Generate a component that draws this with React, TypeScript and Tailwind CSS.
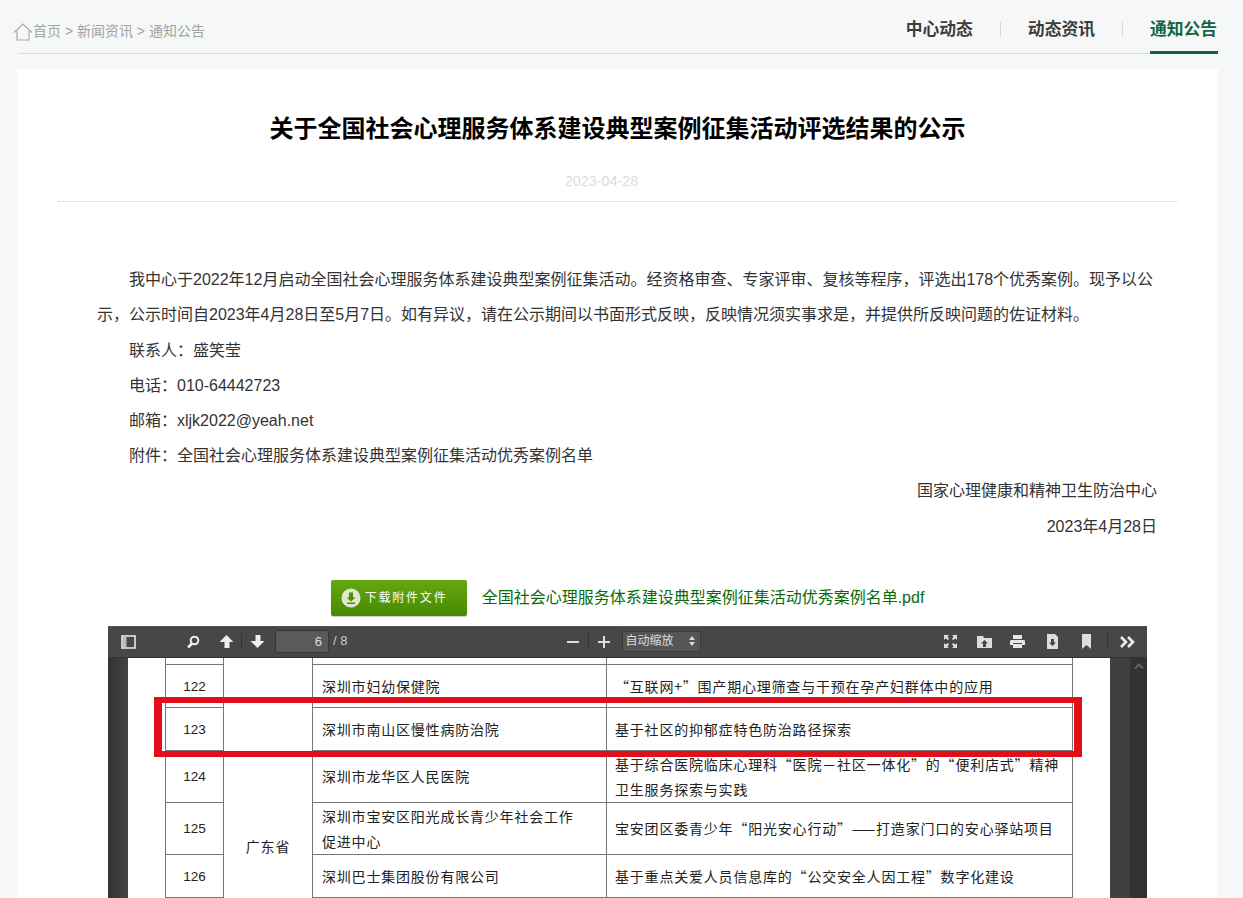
import React from "react";

const rows = [
  { h: "h-[7px]", n: "", org: "", title: "" },
  { h: "h-[43px]", n: "122", org: "深圳市妇幼保健院", title: "“互联网+”围产期心理筛查与干预在孕产妇群体中的应用" },
  { h: "h-[43px]", n: "123", org: "深圳市南山区慢性病防治院", title: "基于社区的抑郁症特色防治路径探索" },
  { h: "h-[52px]", n: "124", org: "深圳市龙华区人民医院", title: "基于综合医院临床心理科“医院－社区一体化”的“便利店式”精神卫生服务探索与实践" },
  { h: "h-[52px]", n: "125", org: "深圳市宝安区阳光成长青少年社会工作促进中心", title: "宝安团区委青少年“阳光安心行动”——打造家门口的安心驿站项目" },
  { h: "h-[43px]", n: "126", org: "深圳巴士集团股份有限公司", title: "基于重点关爱人员信息库的“公交安全人因工程”数字化建设" },
];

function Tool({ children, className = "" }: { children: React.ReactNode; className?: string }) {
  return <span className={`flex items-center justify-center mt-[1px] text-[#e6e6e6] ${className}`}>{children}</span>;
}

function Toolbar() {
  return (
    <div className="h-[32px] shrink-0 bg-[#474747] border-b border-[#333] flex items-center text-[#d9d9d9] text-[13px] relative shadow-[inset_0_1px_0_#555]">
      <Tool className="w-[16px] ml-[12px]">
        <svg width="15" height="14" viewBox="0 0 15 14"><rect x="1" y="1" width="13" height="12" fill="none" stroke="#e6e6e6" strokeWidth="1.6" /><rect x="2" y="2" width="3.5" height="10" fill="#bbb" /></svg>
      </Tool>
      <Tool className="w-[16px] ml-[49px]">
        <svg width="14" height="14" viewBox="0 0 14 14"><circle cx="8.5" cy="5.5" r="3.8" fill="none" stroke="#eee" strokeWidth="2" /><path d="M6 8.5L2 12.5" stroke="#eee" strokeWidth="2.6" /></svg>
      </Tool>
      <Tool className="w-[16px] ml-[17px]">
        <svg width="15" height="15" viewBox="0 0 15 15"><path d="M7.5 1L14.5 8H10.5V14H5.5V8H0.5Z" fill="#eee" /></svg>
      </Tool>
      <span className="w-px h-[16px] bg-[#333] ml-[7px]" />
      <Tool className="w-[16px] ml-[7px]">
        <svg width="15" height="15" viewBox="0 0 15 15"><path d="M7.5 14L14.5 7H10.5V1H5.5V7H0.5Z" fill="#eee" /></svg>
      </Tool>
      <span className="w-[54px] h-[23px] ml-[10px] bg-[#5a5a5a] border border-[#383838] rounded-[2px] text-right pr-[6px] leading-[21px] text-[#ddd] text-[13px]">6</span>
      <span className="ml-[4px] font-['Liberation_Sans'] text-[#ccc]">/ 8</span>
      <Tool className="w-[14px] ml-[219px]">
        <svg width="12" height="12" viewBox="0 0 12 12"><rect x="0" y="5" width="12" height="2" fill="#ddd" /></svg>
      </Tool>
      <span className="w-px h-[16px] bg-[#333] ml-[8px]" />
      <Tool className="w-[14px] ml-[8px]">
        <svg width="12" height="12" viewBox="0 0 12 12"><path d="M0 5H5V0H7V5H12V7H7V12H5V7H0Z" fill="#ddd" /></svg>
      </Tool>
      <span className="w-[79px] h-[21px] ml-[11px] bg-[#555] border border-[#3a3a3a] rounded-[2px] flex items-center justify-between px-[2px] text-[12px] text-[#ddd]">
        <span>自动缩放</span>
        <svg width="6" height="10" viewBox="0 0 6 10" className="mr-[3px]"><path d="M3 0L6 4H0ZM3 10L0 6H6Z" fill="#ddd" /></svg>
      </span>
      <div className="ml-auto flex items-center">
        <Tool className="w-[16px]">
          <svg width="15" height="15" viewBox="0 0 15 15"><path d="M1 1H6L4.5 2.5L6 5L5 6L2.5 4.5L1 6ZM14 1V6L12.5 4.5L10 6L9 5L10.5 2.5L9 1ZM1 14V9L2.5 10.5L5 9L6 10L4.5 12.5L6 14ZM14 14H9L10.5 12.5L9 10L10 9L12.5 10.5L14 9Z" fill="#ddd" /></svg>
        </Tool>
        <Tool className="w-[18px] ml-[17px]">
          <svg width="17" height="15" viewBox="0 0 17 15"><path d="M1 2H7L8 4H16V14H1Z" fill="#ddd" /><path d="M8.5 6L12 9.5H10V13H7V9.5H5Z" fill="#474747" /></svg>
        </Tool>
        <Tool className="w-[18px] ml-[15px]">
          <svg width="17" height="15" viewBox="0 0 17 15"><path d="M4 1H13V5H4Z" fill="#e6e6e6" /><path d="M2 6H15Q16 6 16 7.5V11H13V9H4V11H1V7.5Q1 6 2 6Z" fill="#e6e6e6" /><path d="M4 10H13V14H4Z" fill="#e6e6e6" /></svg>
        </Tool>
        <Tool className="w-[14px] ml-[19px]">
          <svg width="13" height="15" viewBox="0 0 13 15"><path d="M1 0H9L12 3V15H1Z" fill="#ddd" /><path d="M5 5H8V8.5H10L6.5 12L3 8.5H5Z" fill="#474747" /></svg>
        </Tool>
        <Tool className="w-[10px] ml-[22px]">
          <svg width="9" height="15" viewBox="0 0 9 15"><path d="M0 0H9V15L4.5 11L0 15Z" fill="#ddd" /></svg>
        </Tool>
        <span className="w-px h-[16px] bg-[#333] ml-[16px]" />
        <Tool className="w-[15px] ml-[12px] mr-[12px]">
          <svg width="15" height="12" viewBox="0 0 15 12" fill="none" stroke="#eee" strokeWidth="2.6"><path d="M1 1L6 6L1 11" /><path d="M8 1L13 6L8 11" /></svg>
        </Tool>
      </div>
    </div>
  );
}

function PdfPage() {
  return (
    <div className="flex-1 flex bg-[#404040] min-h-0">
      <div className="w-[20px] bg-gradient-to-r from-[#333] to-[#444]" />
      <div className="w-[982px] bg-white pl-[37px] relative overflow-hidden">
        <table className="table-fixed border-collapse w-[907px] text-[14px] tracking-[0.8px] text-[#222] font-['Noto_Sans_CJK_SC',sans-serif]">
          <colgroup>
            <col className="w-[58px]" />
            <col className="w-[89px]" />
            <col className="w-[294px]" />
            <col className="w-[466px]" />
          </colgroup>
          <tbody>
            {rows.map((r, i) => (
              <tr key={i} className={r.h}>
                <td className="border border-[#777] border-t-0 text-center p-0 leading-[25px] font-['Liberation_Sans',sans-serif] text-[13.5px] tracking-normal">{r.n}</td>
                {i === 0 && (
                  <td rowSpan={6} className="border-x border-[#777] text-center p-0 align-top">
                    <div className="pt-[178px]">广东省</div>
                  </td>
                )}
                <td className="border border-[#777] border-t-0 p-0 pl-[9px] pr-[32px] leading-[25px]">{r.org}</td>
                <td className="border border-[#777] border-t-0 p-0 pl-[8px] pr-[9px] leading-[25px]">{r.title}</td>
              </tr>
            ))}
          </tbody>
        </table>
      </div>
      <div className="flex-1 flex">
        <div className="w-[20px] bg-[#404040]" />
        <div className="flex-1 bg-[#333] flex justify-center pt-[5px]">
          <svg width="10" height="6" viewBox="0 0 10 6" fill="none" stroke="#666" strokeWidth="2"><path d="M1 5.5L5 1.5L9 5.5" /></svg>
        </div>
      </div>
    </div>
  );
}

export default function App() {
  const body = "text-[16px] leading-[35.2px] text-[#333]";
  return (
    <div className="relative h-[898px] overflow-hidden bg-[#f5f8f7] font-['Liberation_Sans','Noto_Sans_CJK_SC',sans-serif]">
      <header className="ml-[18px] mr-[25px] h-[54px] border-b border-[#d9dedb] flex items-center justify-between">
        <nav className="flex items-center text-[14px] text-[#a3a3a3] -ml-[5px] mt-[10px]">
          <svg width="20" height="18" viewBox="0 0 20 18" fill="none" stroke="#aaa" strokeWidth="1.2"><path d="M1 9.5L10 1L19 9.5" /><path d="M4 8V17H16V8" /></svg>
          <span>首页 &gt; 新闻资讯 &gt; 通知公告</span>
        </nav>
        <nav className="flex items-center h-full text-[16.8px] font-bold text-[#3d3d3d]">
          <span className="mt-[6px]">中心动态</span>
          <span className="w-px h-[14px] bg-[#d5d9d6] mx-[27px] mt-[5px]" />
          <span className="mt-[6px]">动态资讯</span>
          <span className="w-px h-[14px] bg-[#d5d9d6] mx-[27px] mt-[5px]" />
          <span className="h-[54px] pt-[17px] text-[#12663f] border-b-[3px] border-[#12663f] w-[68px] whitespace-nowrap">通知公告</span>
        </nav>
      </header>

      <main className="mt-[15px] ml-[17px] mr-[25px] bg-white h-[900px] pt-[42px]">
        <h1 className="text-[24px] leading-[36px] font-bold text-black text-center">关于全国社会心理服务体系建设典型案例征集活动评选结果的公示</h1>
        <div className="mt-[24px] pr-[32px] text-center text-[14.4px] leading-[20px] text-[#dcdcdc]">2023-04-28</div>
        <div className="ml-[41px] mr-[40px] mt-[10px] border-b border-dotted border-[#cfcfcf]" />

        <article className="ml-[80px] mr-[61px] mt-[60.2px]">
          <p className={`${body} indent-[32px]`}>我中心于2022年12月启动全国社会心理服务体系建设典型案例征集活动。经资格审查、专家评审、复核等程序，评选出178个优秀案例。现予以公示，公示时间自2023年4月28日至5月7日。如有异议，请在公示期间以书面形式反映，反映情况须实事求是，并提供所反映问题的佐证材料。</p>
          <p className={`${body} indent-[32px]`}>联系人：盛笑莹</p>
          <p className={`${body} indent-[32px]`}>电话：010-64442723</p>
          <p className={`${body} indent-[32px]`}>邮箱：xljk2022@yeah.net</p>
          <p className={`${body} indent-[32px]`}>附件：全国社会心理服务体系建设典型案例征集活动优秀案例名单</p>
          <p className={`${body} text-right`}>国家心理健康和精神卫生防治中心</p>
          <p className={`${body} text-right`}>2023年4月28日</p>
        </article>

        <div className="mt-[35.8px] pl-[20px] flex items-center justify-center gap-[15px]">
          <span className="w-[136px] h-[36px] rounded-[2px] bg-gradient-to-b from-[#65a713] to-[#468a02] flex items-center pl-[10px] text-white text-[12px] tracking-[1.8px] shadow-[0_1px_1px_rgba(0,0,0,0.2)]">
            <svg width="20" height="20" viewBox="0 0 20 20" className="mr-[4px] shrink-0">
              <circle cx="10" cy="10" r="9.5" fill="#dfe8c8" />
              <path d="M8 4.5H12V9.5H14.5L10 13.5L5.5 9.5H8Z M6 14.5H14V16H6Z" fill="#4f8d12" />
            </svg>
            下载附件文件
          </span>
          <span className="text-[16px] text-[#0a6a0a]">全国社会心理服务体系建设典型案例征集活动优秀案例名单.pdf</span>
        </div>

        <div className="mt-[10px] ml-[91px] mr-[71px] h-[272px] flex flex-col overflow-hidden">
          <Toolbar />
          <PdfPage />
        </div>
      </main>

      <div className="absolute left-[154px] top-[697px] w-[928px] h-[60px] border-x-[8px] border-y-[6px] border-[#e0101a]" />
    </div>
  );
}
